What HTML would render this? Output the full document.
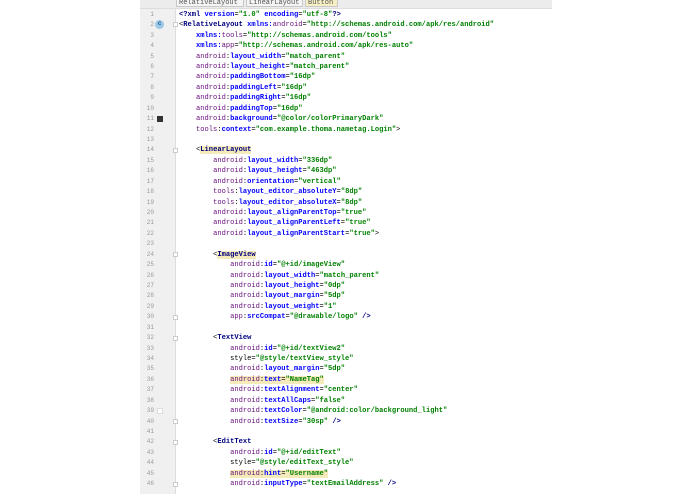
<!DOCTYPE html>
<html><head><style>
body{margin:0;width:695px;height:494px;background:#fff;position:relative;overflow:hidden;font-family:"Liberation Mono",monospace;}
#bar{position:absolute;left:140px;top:0;width:412px;height:8px;background:#ececec;border-bottom:1px solid #ddd;}
.tab{position:absolute;top:-3px;height:10px;font-size:7px;line-height:10px;color:#555;background:#f4f4f4;border:1px solid #c8c8c8;padding:0 2px;box-sizing:border-box;}
#gut{position:absolute;left:140px;top:9px;width:35px;height:485px;background:#f0f0f0;border-right:1px solid #ddd;}
.ln{position:absolute;left:140px;width:14px;text-align:right;font-size:6px;color:#999;height:10.43px;line-height:10.43px;}
.l{position:absolute;left:179px;white-space:pre;font-size:7.1px;height:10.43px;line-height:10.43px;color:#000;}
.t{color:#000080;font-weight:bold}
.n{color:#660e7a}
.a{color:#0000ff;font-weight:bold}
.v{color:#008000;font-weight:bold}
.h{background:#f5eab9}
.fold{position:absolute;left:173px;width:5px;height:5px;border:1px solid #ccc;background:#fff;box-sizing:border-box;}
</style></head><body>
<div id="bar">
<div class="tab" style="left:36px;width:68px">RelativeLayout</div>
<div class="tab" style="left:106px;width:57px">LinearLayout</div>
<div class="tab" style="left:165px;width:33px;background:#f7efc4">Button</div>
</div>
<div id="gut"></div>
<div style="position:absolute;left:155px;top:20px;width:9px;height:9px;border-radius:50%;background:#9cc8e8;color:#2a5b8c;font:bold 6px/9px 'Liberation Sans',sans-serif;text-align:center">c</div>
<div style="position:absolute;left:157px;top:116px;width:6px;height:6px;background:#333"></div>
<div style="position:absolute;left:157px;top:408px;width:6px;height:6px;background:#fff;border:1px solid #ddd;box-sizing:border-box"></div>
<div class="fold" style="top:22px"></div>
<div class="fold" style="top:148px"></div>
<div class="fold" style="top:252px"></div>
<div class="fold" style="top:315px"></div>
<div class="fold" style="top:336px"></div>
<div class="fold" style="top:419px"></div>
<div class="fold" style="top:440px"></div>
<div class="fold" style="top:482px"></div>
<script>
var L=[
'<span class="t">&lt;?xml </span><span class="a">version</span>=<span class="v">"1.0"</span> <span class="a">encoding</span>=<span class="v">"utf-8"</span><span class="t">?&gt;</span>',
'&lt;<span class="t">RelativeLayout </span><span class="a">xmlns:</span><span class="n">android</span>=<span class="v">"http://schemas.android.com/apk/res/android"</span>',
'    <span class="a">xmlns:</span><span class="n">tools</span>=<span class="v">"http://schemas.android.com/tools"</span>',
'    <span class="a">xmlns:</span><span class="n">app</span>=<span class="v">"http://schemas.android.com/apk/res-auto"</span>',
'A:layout_width|"match_parent"','A:layout_height|"match_parent"','A:paddingBottom|"16dp"','A:paddingLeft|"16dp"','A:paddingRight|"16dp"','A:paddingTop|"16dp"','A:background|"@color/colorPrimaryDark"',
'T:context|"com.example.thoma.nametag.Login"&gt;',
'',
'    &lt;<span class="t h">LinearLayout</span>',
'B:layout_width|"336dp"','B:layout_height|"463dp"','B:orientation|"vertical"','BT:layout_editor_absoluteY|"8dp"','BT:layout_editor_absoluteX|"8dp"','B:layout_alignParentTop|"true"','B:layout_alignParentLeft|"true"','B:layout_alignParentStart|"true"&gt;',
'',
'        &lt;<span class="t h">ImageView</span>',
'C:id|"@+id/imageView"','C:layout_width|"match_parent"','C:layout_height|"0dp"','C:layout_margin|"5dp"','C:layout_weight|"1"','CP:srcCompat|"@drawable/logo" /&gt;',
'',
'        &lt;<span class="t">TextView</span>',
'C:id|"@+id/textView2"',
'            style=<span class="v">"@style/textView_style"</span>',
'C:layout_margin|"5dp"','H:text|"NameTag"','C:textAlignment|"center"','C:textAllCaps|"false"','C:textColor|"@android:color/background_light"','C:textSize|"30sp" /&gt;',
'',
'        &lt;<span class="t">EditText</span>',
'C:id|"@+id/editText"',
'            style=<span class="v">"@style/editText_style"</span>',
'H:hint|"Username"','C:inputType|"textEmailAddress" /&gt;'
];
var ind={A:'    ',T:'    ',B:'        ',BT:'        ',C:'            ',CP:'            ',H:'            '};
var ns={A:'android',T:'tools',B:'android',BT:'tools',C:'android',CP:'app',H:'android'};
var h='';
for(var i=0;i<L.length;i++){
 var s=L[i],m=s.match(/^([A-Z]+):([^|]+)\|("[^"]*")(.*)$/);
 if(m){var k=m[1];var body='<span class="n">'+ns[k]+'</span>:<span class="a">'+m[2]+'</span>=<span class="v">'+m[3]+'</span>';
  if(k=='H')body='<span class="h">'+body+'</span>';
  s=ind[k]+body+m[4].replace('/&gt;','<span class="t">/&gt;</span>');}
 var y=(9.8+i*10.43).toFixed(2);
 h+='<div class="ln" style="top:'+y+'px">'+(i+1)+'</div><div class="l" style="top:'+y+'px">'+s+'</div>';
}
document.write(h);
</script>
</body></html>
